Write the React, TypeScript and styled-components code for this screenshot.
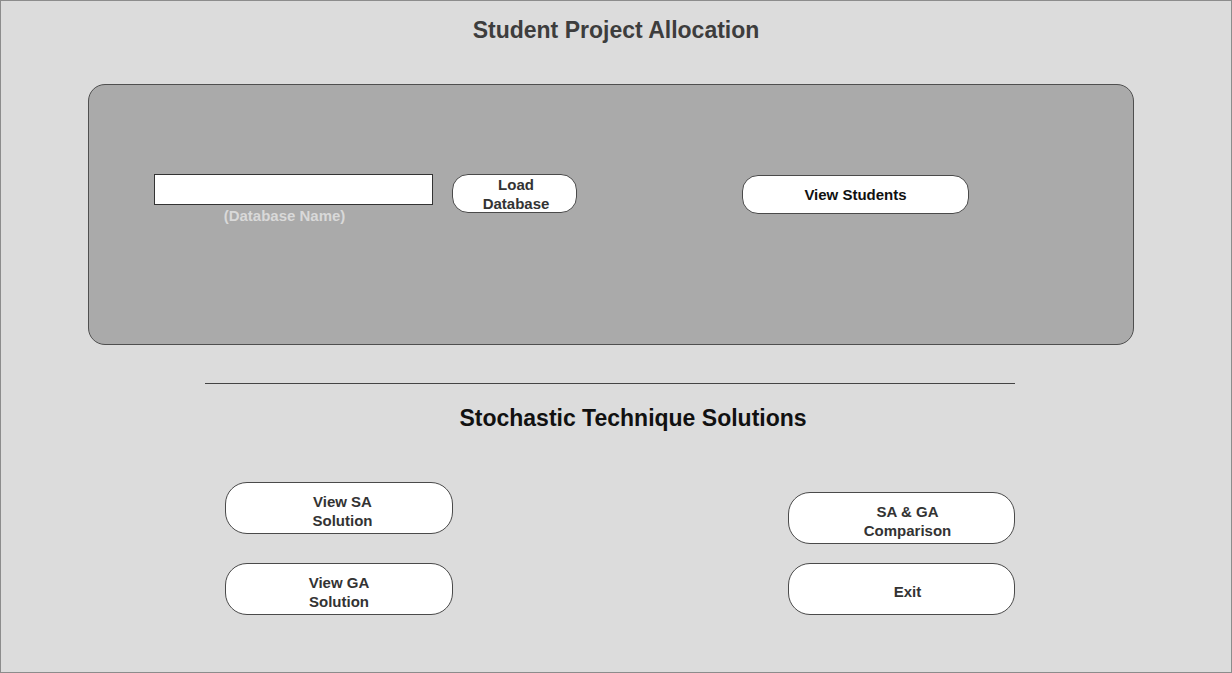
import React from "react";
import styled, { createGlobalStyle } from "styled-components";

const Global = createGlobalStyle`
  html, body { margin: 0; padding: 0; background: #dcdcdc; }
  body { font-family: "Liberation Sans", Arial, sans-serif; }
  * { box-sizing: border-box; }
`;

const Frame = styled.div`
  width: 1232px;
  height: 673px;
  border: 1px solid #8c8c8c;
  background: #dcdcdc;
  display: flex;
  flex-direction: column;
  padding-top: 15px;
`;

const Title = styled.h1<{ $color: string }>`
  margin: 0;
  font-size: 23px;
  line-height: 28px;
  font-weight: 700;
  text-align: center;
  color: ${(p) => p.$color};
  padding-left: ${(p) => (p.$color === "#111" ? "34px" : "0")};
`;

const Panel = styled.section`
  margin: 40px 0 0 87px;
  width: 1046px;
  height: 261px;
  background: #aaaaaa;
  border: 1px solid #4f4f4f;
  border-radius: 17px;
  padding: 89px 0 0 65px;
  display: flex;
  align-items: flex-start;
`;

const Field = styled.div`
  display: flex;
  flex-direction: column;
  align-items: center;
  width: 279px;
`;

const Input = styled.input`
  width: 279px;
  height: 31px;
  border: 1px solid #333;
  background: #fff;
  margin: 0;
  padding: 2px 4px;
  font-family: inherit;
  font-size: 14px;
`;

const Hint = styled.span`
  margin-top: 3px;
  font-size: 15px;
  line-height: 16px;
  font-weight: 700;
  color: #d9d9d9;
  padding-right: 18px;
`;

const Pill = styled.button<{ $w: number; $h: number; $color?: string; $shift?: number; $top?: number; $drop?: number }>`
  width: ${(p) => p.$w}px;
  height: ${(p) => p.$h}px;
  margin-top: ${(p) => p.$top ?? 0}px;
  border: 1px solid #4a4a4a;
  border-radius: ${(p) => Math.round(p.$h / 2.4)}px;
  background: #fff;
  font-family: "Liberation Sans", Arial, sans-serif;
  font-weight: 700;
  font-size: 15px;
  line-height: 19px;
  color: ${(p) => p.$color ?? "#333"};
  padding: ${(p) => p.$drop ?? 0}px 0 0 ${(p) => p.$shift ?? 0}px;
  display: flex;
  flex-direction: column;
  align-items: center;
  justify-content: center;
  cursor: pointer;
`;

const Divider = styled.hr`
  margin: 38px 0 0 204px;
  width: 810px;
  border: none;
  border-top: 1px solid #444;
  height: 0;
`;

const Spacer = styled.div<{ $w: number }>`
  width: ${(p) => p.$w}px;
  flex: none;
`;

const Actions = styled.div`
  margin: 50px 0 0 224px;
  display: flex;
  align-items: flex-end;
  gap: 335px;
`;

const Column = styled.div<{ $gap: number }>`
  display: flex;
  flex-direction: column;
  gap: ${(p) => p.$gap}px;
`;

const Sub = styled.div`
  margin-top: 20px;
`;

export default function App() {
  return (
    <>
      <Global />
      <Frame>
        <Title $color="#3d3d3d">Student Project Allocation</Title>
        <Panel>
          <Field>
            <Input aria-label="Database Name" />
            <Hint>(Database Name)</Hint>
          </Field>
          <Spacer $w={19} />
          <Pill $w={125} $h={39} $shift={3} $drop={0}>
            <span>Load</span>
            <span>Database</span>
          </Pill>
          <Spacer $w={165} />
          <Pill $w={227} $h={39} $color="#111" $top={1} $drop={0}>
            View Students
          </Pill>
        </Panel>
        <Divider />
        <Sub>
          <Title $color="#111">Stochastic Technique Solutions</Title>
        </Sub>
        <Actions>
          <Column $gap={29}>
            <Pill $w={228} $h={52} $shift={7} $drop={5}>
              <span>View SA</span>
              <span>Solution</span>
            </Pill>
            <Pill $w={228} $h={52} $drop={5}>
              <span>View GA</span>
              <span>Solution</span>
            </Pill>
          </Column>
          <Column $gap={19}>
            <Pill $w={227} $h={52} $shift={12} $drop={5}>
              <span>SA &amp; GA</span>
              <span>Comparison</span>
            </Pill>
            <Pill $w={227} $h={52} $shift={12} $drop={5}>
              <span>Exit</span>
            </Pill>
          </Column>
        </Actions>
      </Frame>
    </>
  );
}
